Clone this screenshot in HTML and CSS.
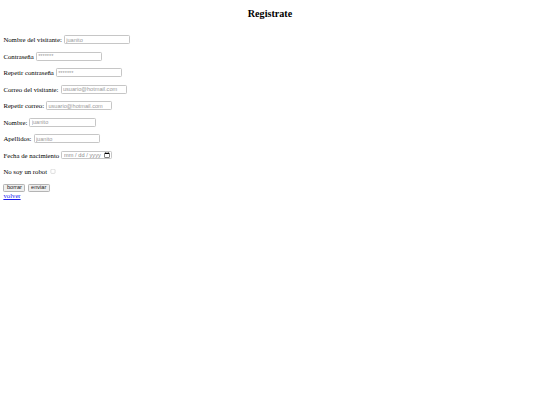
FILE: index.html
```html
<!DOCTYPE html>
<html lang="es">
<head>
<meta charset="utf-8">
<title>Registrate</title>
<link rel="stylesheet" href="styles.css">
</head>
<body>
<div class="page">
  <h2 class="title">Registrate</h2>
  <form class="form">
    <p class="row"><span>Nombre del visitante:</span><input class="field" type="text" placeholder="juanito"></p>
    <p class="row"><span>Contraseña</span><input class="field" type="password" placeholder="*******"></p>
    <p class="row"><span>Repetir contraseña</span><input class="field" type="password" placeholder="*******"></p>
    <p class="row"><span>Correo del visitante:</span><input class="field" type="email" placeholder="usuario@hotmail.com"></p>
    <p class="row"><span>Repetir correo:</span><input class="field" type="email" placeholder="usuario@hotmail.com"></p>
    <p class="row"><span>Nombre:</span><input class="field" type="text" placeholder="juanito"></p>
    <p class="row"><span>Apellidos:</span><input class="field" type="text" placeholder="juanito"></p>
    <p class="row"><span>Fecha de nacimiento</span><input class="field date" type="date"></p>
    <p class="row"><span>No soy un robot</span><input class="check" type="checkbox"></p>
    <div class="actions">
      <input class="btn" type="reset" value="borrar">
      <input class="btn" type="submit" value="enviar">
    </div>
  </form>
  <a class="back" href="#">volver</a>
</div>
</body>
</html>
```

FILE: styles.css
```css
html, body {
  margin: 0;
  padding: 0;
  background: #fff;
}
.page {
  zoom: 0.422;
  padding: 8px;
  font-family: "Liberation Serif", "Times New Roman", serif;
  font-size: 16px;
  color: #000;
}
.title {
  text-align: center;
  font-size: 24px;
  line-height: 28px;
  font-weight: bold;
  margin: 12px 0 35px;
}
.form {
  margin: 0;
}
.row {
  display: flex;
  align-items: center;
  gap: 5px;
  height: 23px;
  margin: 16px 0;
}
.field {
  box-sizing: border-box;
  width: 157px;
  height: 21px;
  margin: 0;
  padding: 1px 3px;
  border: 1px solid #c6c6c6;
  border-radius: 3px;
  font-family: "Liberation Sans", Arial, sans-serif;
  font-size: 13.33px;
  color: #777;
  background: #fff;
}
.field::placeholder {
  color: #9a9a9a;
}
.date {
  width: 121px;
  padding: 1px 2px 1px 3px;
  color: #8a8a8a;
}
.date::-webkit-datetime-edit-text {
  padding: 0 3px;
}
.check {
  width: 13px;
  height: 13px;
  margin: 0 0 0 3px;
  accent-color: #999;
  opacity: 0.55;
}
.actions {
  display: flex;
  align-items: center;
  gap: 5px;
  height: 19px;
  margin-top: 18px;
}
.btn {
  box-sizing: border-box;
  height: 17px;
  margin: 0;
  padding: 0 6px;
  border: 1px solid #b4b4b4;
  border-radius: 3px;
  background: #efefef;
  font-family: "Liberation Sans", Arial, sans-serif;
  font-size: 13.33px;
  line-height: 14px;
  color: #222;
}
.back {
  display: block;
  margin-top: 1px;
  line-height: 20px;
  color: #1a1aee;
}
```
